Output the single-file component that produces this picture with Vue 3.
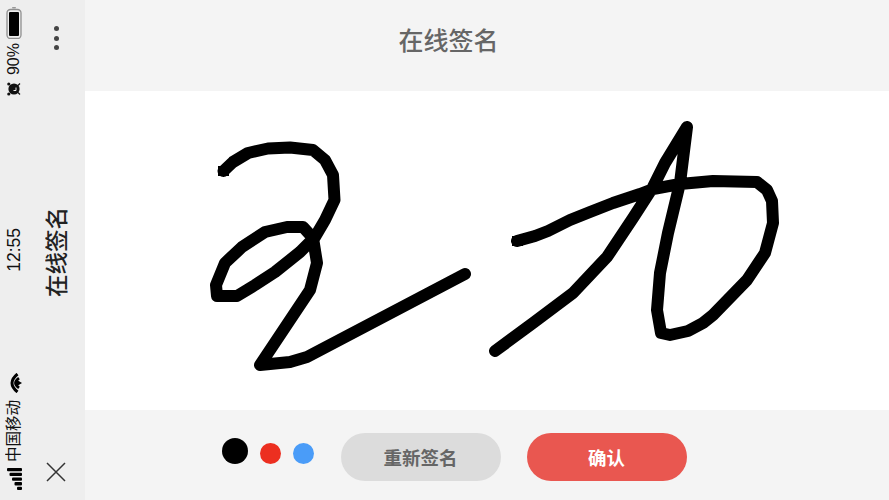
<script setup>
const dots = [
  { color: '#000', big: true },
  { color: '#ec2f20', big: false },
  { color: '#4a9cf8', big: false }
]
const strokes = [
  'M223.5 171 L233 162 L248 153 L268 148.5 L290 147.5 L313 150 L325 160 L333 175 L334.500 200 L325 220 L315 237 L300 252 L275 272 L255 285 L237 296 L217 296 L216 285 L225 263 L242 247 L265 232 L287 227 L303 227 L313 238 L317 263 L310 290 L290 320 L260 365 L290 362 L307 357 L465 274',
  'M517 241 L535 236 L548 231 L570 220 L590 212 L613 203 L640 194 L653 189 L680 184 L713 181 L757 182 L767 190 L772 201 L773 223 L765 253 L747 280 L713 315 L703 323 L688 331 L670 335 L661 333 L657 310 L660 273 L668 233 L680 183 L687 127 L665 163 L653 187 L633 218 L607 257 L573 293 L533 323 L495 351'
]
</script>

<template>
  <div class="screen">
    <aside class="side">
      <div class="status">
        <div class="status-group top">
          <svg width="16" height="32" viewBox="0 0 16 32">
            <rect x="6" y="0" width="4" height="1.6" rx="0.8" fill="#9a9a9a" />
            <rect x="1" y="2.500" width="14" height="29" rx="3.500" fill="none" stroke="#8f8f8f" stroke-width="1.300" />
            <rect x="3" y="5" width="10" height="24" rx="1" fill="#000" />
          </svg>
          <span class="rot percent">90%</span>
          <svg class="alarm" width="14" height="14" viewBox="0 0 14 14">
            <circle cx="7" cy="7" r="5.600" fill="#111" />
            <circle cx="1.800" cy="2" r="1.600" fill="#111" />
            <circle cx="1.800" cy="12" r="1.600" fill="#111" />
            <path d="M11 3.500 L13 1.500 M11 10.500 L13 12.500" stroke="#111" stroke-width="1.200" />
            <path d="M9 5.500 V8.500 H6.500" fill="none" stroke="#eee" stroke-width="1" />
          </svg>
        </div>
        <span class="rot time">12:55</span>
        <div class="status-group bottom">
          <svg width="15" height="20" viewBox="0 0 15 20">
            <path d="M10.500 1 Q-0.500 10 10.500 19" fill="none" stroke="#000" stroke-width="3" />
            <path d="M12 5.200 Q5 10 12 14.800" fill="none" stroke="#000" stroke-width="2.800" />
            <path d="M15 10 L10 7 L10 13 Z" fill="#000" />
          </svg>
          <span class="rot carrier">中国移动</span>
          <svg width="15" height="23" viewBox="0 0 15 23">
            <rect x="0" y="0" width="15" height="3.300" rx="1" fill="#000" />
            <rect x="2.500" y="4.700" width="12.500" height="3.300" rx="1" fill="#000" />
            <rect x="5" y="9.400" width="10" height="3.300" rx="1" fill="#000" />
            <rect x="7.500" y="14.100" width="7.500" height="3.300" rx="1" fill="#000" />
            <rect x="10" y="18.800" width="5" height="3.300" rx="1" fill="#000" />
          </svg>
        </div>
      </div>
      <div class="tools">
        <div class="more"><i></i><i></i><i></i></div>
        <span class="rot side-title">在线签名</span>
        <svg class="close" width="20" height="20" viewBox="0 0 20 20">
          <path d="M1 1 L19 19 M19 1 L1 19" stroke="#333" stroke-width="1.500" fill="none" />
        </svg>
      </div>
    </aside>
    <main class="main">
      <header class="header">在线签名</header>
      <section class="pad">
        <svg class="ink" width="804" height="319" viewBox="85 91 804 319">
          <path
            v-for="(d, i) in strokes"
            :key="i"
            :d="d"
            fill="none"
            stroke="#000"
            stroke-width="12"
            stroke-linejoin="round"
            stroke-linecap="round"
          />
          <rect x="218" y="166" width="11" height="10" fill="#000" />
          <rect x="512" y="236" width="11" height="10" fill="#000" />
        </svg>
      </section>
      <footer class="footer">
        <div class="colors">
          <span
            v-for="d in dots"
            :key="d.color"
            class="dot"
            :class="{ big: d.big }"
            :style="{ background: d.color }"
          ></span>
        </div>
        <button class="btn reset">重新签名</button>
        <button class="btn ok">确认</button>
      </footer>
    </main>
  </div>
</template>

<style>
html, body { margin: 0; background: #fff; }
</style>

<style scoped>
.screen {
  width: 889px;
  height: 500px;
  display: flex;
  overflow: hidden;
  font-family: "Liberation Sans", "Noto Sans CJK SC", sans-serif;
}
.side {
  width: 85px;
  flex: none;
  background: #eee;
  display: flex;
}
.status {
  width: 27px;
  flex: none;
  padding: 7px 0 7px 1px;
  box-sizing: border-box;
  display: grid;
  grid-template-rows: 1fr auto 1fr;
  justify-items: center;
  align-items: center;
}
.status-group {
  display: flex;
  flex-direction: column;
  align-items: center;
}
.status-group.top { align-self: start; }
.status-group.bottom { align-self: end; margin-bottom: 2px; }
.rot {
  writing-mode: vertical-rl;
  text-orientation: sideways;
  transform: rotate(180deg);
  white-space: nowrap;
}
.percent { font-size: 16px; line-height: 18px; margin-top: 4px; color: #111; }
.alarm { margin-top: 7px; }
.time { font-size: 17.500px; line-height: 18px; color: #111; }
.carrier { font-size: 15.500px; line-height: 18px; margin: 7px 0 6px; color: #111; }
.tools {
  flex: 1;
  padding: 26px 0 18px;
  box-sizing: border-box;
  display: grid;
  grid-template-rows: 1fr auto 1fr;
  justify-items: center;
  align-items: center;
}
.more {
  align-self: start;
  display: flex;
  flex-direction: column;
  gap: 4.500px;
}
.more i {
  width: 5px;
  height: 5px;
  border-radius: 50%;
  background: #444;
}
.side-title {
  font-size: 22.500px;
  line-height: 26px;
  font-weight: 500;
  color: #222;
  margin: 0 0 4px 3px;
}
.close { align-self: end; }
.main {
  flex: 1;
  display: flex;
  flex-direction: column;
}
.header {
  height: 91px;
  padding-right: 77px;
  background: #f4f4f4;
  text-align: center;
  font-size: 25px;
  line-height: 82px;
  font-weight: 500;
  color: #666;
}
.pad {
  height: 319px;
  background: #fff;
}
.ink { display: block; }
.footer {
  flex: 1;
  background: #f4f4f4;
  display: flex;
  align-items: flex-start;
  padding: 23px 0 0 137px;
}
.colors {
  height: 31px;
  display: flex;
  align-items: flex-end;
  gap: 11.500px;
  margin-right: 26.500px;
}
.dot {
  width: 21.500px;
  height: 21.500px;
  border-radius: 50%;
}
.dot.big {
  width: 26px;
  height: 26px;
}
.btn {
  width: 160px;
  height: 48px;
  border: 0;
  border-radius: 24px;
  padding: 0;
  font-family: inherit;
  font-size: 18.500px;
  font-weight: 700;
}
.reset { background: #dcdcdc; color: #666; margin-right: 26px; }
.ok { background: #e95750; color: #fff; }
</style>
